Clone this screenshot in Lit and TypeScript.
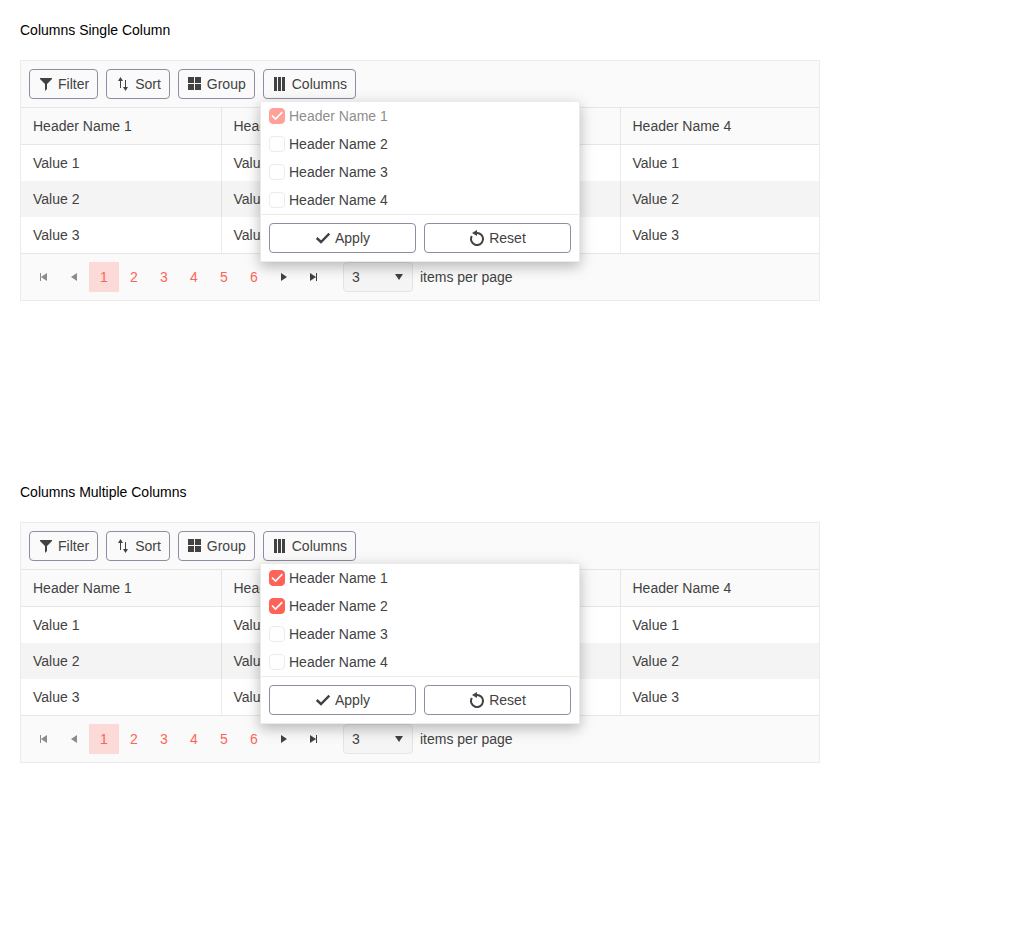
import { LitElement, html, css, svg, nothing } from "lit";
import { customElement, property } from "lit/decorators.js";

const icons: Record<string, unknown> = {
  filter: svg`<path d="M2 2v1l5 5v7l2-2V8l5-5V2z"/>`,
  sort: svg`<path d="M5 12V5H3l2.500-4L8 5H6v7zM10 4v7H8l2.500 4 2.500-4h-2V4z"/>`,
  group: svg`<path d="M1 1h6v6H1zM8 1h6v6H8zM1 8h6v6H1zM8 8h6v6H8z"/>`,
  columns: svg`<path d="M2 1h3v14H2zM6 1h3v14H6zM10 1h3v14h-3z"/>`,
  check: svg`<path d="M1.700 8l4.300 4L14.300 3.700" fill="none" stroke="currentColor" stroke-width="2.400"/>`,
  reset: svg`<path d="M7.500 3A6 6 0 1 1 2.800 6" fill="none" stroke="currentColor" stroke-width="2"/><path d="M3 3l5-3v6z"/>`,
  first: svg`<path d="M4 4h1v8H4zM11 4v8L5 8z"/>`,
  prev: svg`<path d="M11 4v8L5 8z"/>`,
  next: svg`<path d="M5 4v8l6-4z"/>`,
  last: svg`<path d="M4 4v8l6-4zM10 4h1v8h-1z"/>`,
  down: svg`<path d="M4 5h8l-4 6z"/>`,
};

const icon = (name: string) =>
  html`<svg class="icon" viewBox="0 0 16 16" aria-hidden="true">${icons[name]}</svg>`;

const shared = css`
  * {
    box-sizing: border-box;
  }
  .icon {
    width: 16px;
    height: 16px;
    flex: none;
    fill: currentColor;
  }
  .button {
    display: inline-flex;
    align-items: center;
    justify-content: center;
    gap: 4px;
    padding: 4px 8px;
    border: 1px solid #8f8da1;
    border-radius: 4px;
    background: transparent;
    color: inherit;
    font: inherit;
    cursor: pointer;
  }
`;

@customElement("column-chooser")
export class ColumnChooser extends LitElement {
  @property({ attribute: false }) columns: string[] = [];
  @property({ attribute: false }) checked: string[] = [];
  @property({ type: Boolean }) single = false;

  static styles = [
    shared,
    css`
      :host {
        display: block;
        box-sizing: border-box;
        border: 1px solid #ebebeb;
        background: #fff;
        box-shadow: 0 5px 10px rgba(0, 0, 0, 0.12), 0 4px 16px rgba(0, 0, 0, 0.16);
      }
      .item {
        display: flex;
        align-items: center;
        gap: 4px;
        padding: 4px 8px;
      }
      .item.disabled {
        opacity: 0.6;
      }
      .box {
        display: grid;
        width: 16px;
        height: 16px;
      }
      .box > * {
        grid-area: 1 / 1;
      }
      input {
        appearance: none;
        width: 16px;
        height: 16px;
        margin: 0;
        border: 1px solid #ebebeb;
        border-radius: 4px;
        background: #fff;
      }
      input:checked {
        border-color: #ff6358;
        background: #ff6358;
      }
      .tick {
        width: 16px;
        height: 16px;
        fill: none;
        stroke: #fff;
        stroke-width: 1.7;
        pointer-events: none;
      }
      .actions {
        display: grid;
        grid-template-columns: 1fr 1fr;
        gap: 8px;
        padding: 8px;
        border-top: 1px solid #ebebeb;
      }
    `,
  ];

  render() {
    return html`
      ${this.columns.map((name) => {
        const on = this.checked.includes(name);
        const locked = this.single && on;
        return html`<label class="item ${locked ? "disabled" : ""}">
          <span class="box">
            <input type="checkbox" .checked=${on} ?disabled=${locked} />
            ${on
              ? html`<svg class="tick" viewBox="0 0 16 16" aria-hidden="true"><path d="M3 7.500L6.500 11 13.300 4.200" /></svg>`
              : nothing}
          </span>
          <span>${name}</span>
        </label>`;
      })}
      <div class="actions">
        <button class="button" type="button">${icon("check")}Apply</button>
        <button class="button" type="button">${icon("reset")}Reset</button>
      </div>
    `;
  }
}

@customElement("data-grid")
export class DataGrid extends LitElement {
  @property({ attribute: false }) checked: string[] = [];

  private columns = [1, 2, 3, 4].map((n) => `Header Name ${n}`);
  private rows = ["Value 1", "Value 2", "Value 3"];
  private tools = [
    ["filter", "Filter"],
    ["sort", "Sort"],
    ["group", "Group"],
    ["columns", "Columns"],
  ];

  static styles = [
    shared,
    css`
      :host {
        display: block;
        position: relative;
        box-sizing: border-box;
        max-width: 800px;
        border: 1px solid #ebebeb;
        background: #fff;
        color: #424242;
      }
      .toolbar {
        display: flex;
        gap: 8px;
        padding: 8px;
        border-bottom: 1px solid #e6e6e6;
        background: #fafafa;
      }
      table {
        width: 100%;
        table-layout: fixed;
        border-collapse: separate;
        border-spacing: 0;
      }
      th,
      td {
        padding: 8px 12px;
        border-left: 1px solid rgba(0, 0, 0, 0.08);
        text-align: left;
        font-weight: 400;
      }
      th:first-child,
      td:first-child {
        border-left: 0;
      }
      th {
        border-bottom: 1px solid #e6e6e6;
        background: #fafafa;
      }
      tbody tr:nth-child(even) {
        background: #f4f4f4;
      }
      .pager {
        display: flex;
        align-items: center;
        padding: 8px;
        border-top: 1px solid #e6e6e6;
        background: #fafafa;
      }
      .page {
        display: flex;
        align-items: center;
        justify-content: center;
        width: 30px;
        height: 30px;
        padding: 0;
        border: 0;
        background: transparent;
        color: #ff6358;
        font: inherit;
        cursor: pointer;
      }
      .page.current {
        background: #fbdad8;
      }
      .page.arrow {
        color: #424242;
      }
      .page:disabled {
        opacity: 0.6;
      }
      .size {
        display: flex;
        align-items: center;
        gap: 7px;
        margin-left: 14px;
      }
      .picker {
        display: grid;
        align-items: center;
        width: 70px;
      }
      .picker > * {
        grid-area: 1 / 1;
      }
      .picker .icon {
        justify-self: end;
        margin-right: 6px;
        pointer-events: none;
      }
      select {
        appearance: none;
        width: 100%;
        height: 30px;
        padding: 4px 8px;
        border: 1px solid #e4e4e4;
        border-radius: 4px;
        background: #f5f5f5;
        color: inherit;
        font: inherit;
      }
      .popup {
        position: absolute;
        top: 40px;
        left: 239px;
        width: 320px;
      }
    `,
  ];

  render() {
    return html`
      <div class="toolbar" role="toolbar">
        ${this.tools.map(
          ([name, label]) =>
            html`<button class="button" type="button">${icon(name)}${label}</button>`
        )}
      </div>
      <table>
        <thead>
          <tr>
            ${this.columns.map((c) => html`<th scope="col">${c}</th>`)}
          </tr>
        </thead>
        <tbody>
          ${this.rows.map(
            (value) => html`<tr>${this.columns.map(() => html`<td>${value}</td>`)}</tr>`
          )}
        </tbody>
      </table>
      <div class="pager">
        <button class="page arrow" type="button" disabled aria-label="First page">${icon("first")}</button>
        <button class="page arrow" type="button" disabled aria-label="Previous page">${icon("prev")}</button>
        ${[1, 2, 3, 4, 5, 6].map(
          (n) => html`<button class="page ${n === 1 ? "current" : ""}" type="button">${n}</button>`
        )}
        <button class="page arrow" type="button" aria-label="Next page">${icon("next")}</button>
        <button class="page arrow" type="button" aria-label="Last page">${icon("last")}</button>
        <div class="size">
          <span class="picker">
            <select id="page-size">
              <option>3</option>
            </select>
            ${icon("down")}
          </span>
          <label for="page-size">items per page</label>
        </div>
      </div>
      <column-chooser
        class="popup"
        .columns=${this.columns}
        .checked=${this.checked}
        ?single=${this.checked.length === 1}
      ></column-chooser>
    `;
  }
}

@customElement("app-root")
export class AppRoot extends LitElement {
  static styles = css`
    :host {
      display: block;
      padding: 20px 20px 0;
      background: #fff;
      color: #000;
      font: 14px/20px "Liberation Sans", Arial, sans-serif;
    }
    .title {
      margin: 0 0 20px;
      font-size: 14px;
      font-weight: 400;
    }
    .demo {
      min-height: 422px;
    }
  `;

  private demos = [
    { title: "Columns Single Column", checked: ["Header Name 1"] },
    { title: "Columns Multiple Columns", checked: ["Header Name 1", "Header Name 2"] },
  ];

  render() {
    return this.demos.map(
      (d) => html`<section>
        <h2 class="title">${d.title}</h2>
        <div class="demo"><data-grid .checked=${d.checked}></data-grid></div>
      </section>`
    );
  }
}
